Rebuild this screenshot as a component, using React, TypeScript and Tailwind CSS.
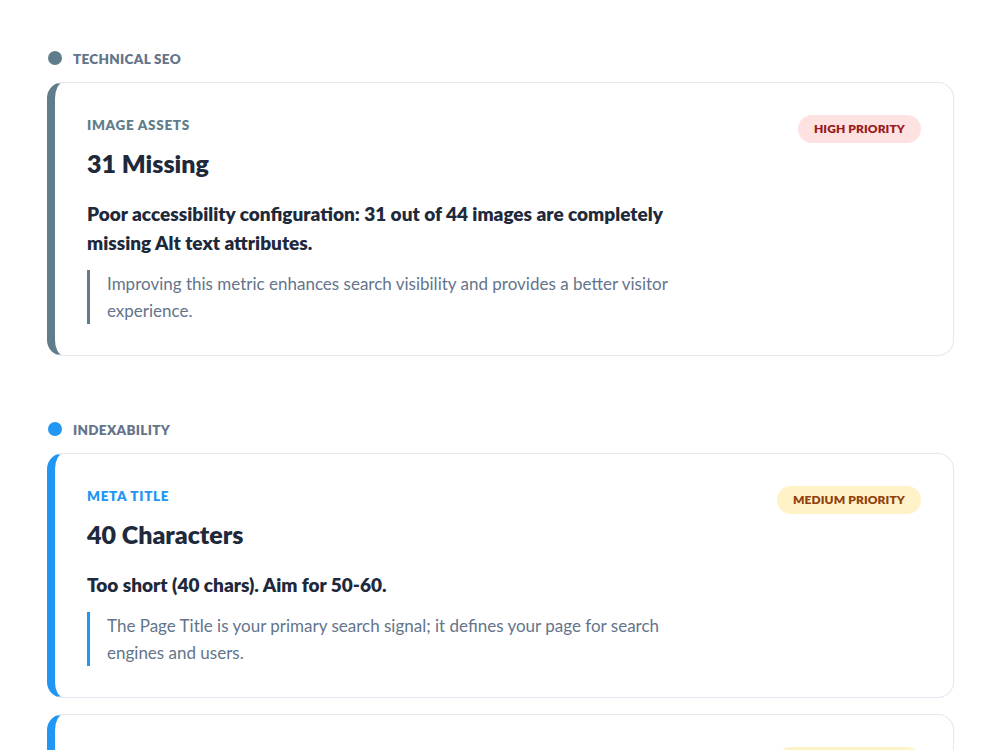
import React from 'react';

type Priority = 'high' | 'medium';

interface Issue {
    section: string;
    accent: 'slate' | 'blue';
    label: string;
    value: string;
    priority: Priority;
    message: string;
    note: string;
}

const issues: Issue[] = [
    {
        section: 'Technical SEO',
        accent: 'slate',
        label: 'Image Assets',
        value: '31 Missing',
        priority: 'high',
        message: 'Poor accessibility configuration: 31 out of 44 images are completely missing Alt text attributes.',
        note: 'Improving this metric enhances search visibility and provides a better visitor experience.'
    },
    {
        section: 'Indexability',
        accent: 'blue',
        label: 'Meta Title',
        value: '40 Characters',
        priority: 'medium',
        message: 'Too short (40 chars). Aim for 50-60.',
        note: 'The Page Title is your primary search signal; it defines your page for search engines and users.'
    }
];

const accentStyles = {
    slate: { dot: 'bg-[#607d8b]', border: 'border-l-[#607d8b]', label: 'text-[#607d8b]', quote: 'border-[#607d8b]' },
    blue: { dot: 'bg-[#2196f3]', border: 'border-l-[#2196f3]', label: 'text-[#2196f3]', quote: 'border-[#2196f3]' }
};

const PriorityBadge: React.FC<{ priority: Priority }> = ({ priority }) => {
    const cls = priority === 'high'
        ? 'bg-[#fee2e2] text-[#991b1b]'
        : 'bg-[#fef3c7] text-[#92400e]';
    return (
        <span className={`shrink-0 h-7 px-4 rounded-full flex items-center text-[12px] font-extrabold uppercase tracking-[0.1px] ${cls}`}>
            {priority === 'high' ? 'High Priority' : 'Medium Priority'}
        </span>
    );
};

const IssueCard: React.FC<{ issue: Issue }> = ({ issue }) => {
    const a = accentStyles[issue.accent];
    return (
        <div className={`bg-white border border-[#e2e8f0] border-l-8 ${a.border} rounded-2xl px-8 pt-8 pb-[31px]`}>
            <div className="flex items-start justify-between gap-6">
                <div>
                    <div className={`text-[13.5px] leading-5 font-extrabold uppercase tracking-[0.7px] ${a.label}`}>{issue.label}</div>
                    <div className="mt-3 text-[25px] leading-8 font-extrabold text-[#1e293b]">{issue.value}</div>
                </div>
                <PriorityBadge priority={issue.priority} />
            </div>
            <p className="mt-5 max-w-[620px] text-[19px] leading-[29px] font-extrabold text-[#1e293b]">{issue.message}</p>
            <blockquote className={`mt-[13px] max-w-[620px] border-l-[3px] ${a.quote} pl-[17px] text-[17px] leading-[27px] text-[#64748b]`}>
                {issue.note}
            </blockquote>
        </div>
    );
};

export default function App() {
    return (
        <div className="min-h-screen bg-white pl-[47px] pr-[46px] pt-12 pb-12 font-['Lato','Liberation_Sans',sans-serif]">
            {issues.map((issue, i) => (
                <section key={issue.label} className={i > 0 ? 'mt-[63px]' : ''}>
                    <div className="flex items-center gap-[11px] h-5 mb-[14px] pl-px">
                        <span className={`w-[14px] h-[14px] rounded-full ${accentStyles[issue.accent].dot}`} />
                        <span className="text-[13.5px] font-extrabold uppercase tracking-[0.3px] text-[#64748b] translate-y-px">{issue.section}</span>
                    </div>
                    <div className="flex flex-col gap-4">
                        <IssueCard issue={issue} />
                        {i === 1 && (
                            <IssueCard
                                issue={{
                                    ...issue,
                                    label: 'Meta Description',
                                    value: '92 Characters',
                                    message: 'Too short (92 chars). Aim for 120-160.',
                                    note: 'A compelling description improves click-through rates from search results.'
                                }}
                            />
                        )}
                    </div>
                </section>
            ))}
        </div>
    );
}
